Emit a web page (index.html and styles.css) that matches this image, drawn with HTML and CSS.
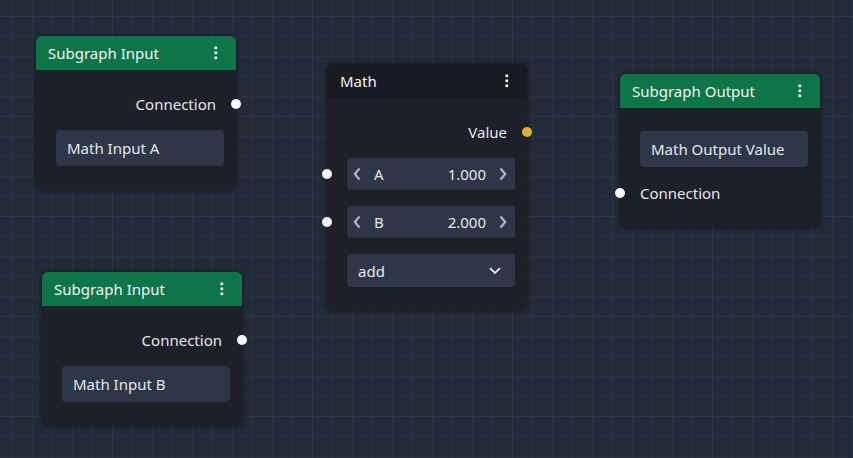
FILE: index.html
```html
<!DOCTYPE html>
<html>
<head>
<meta charset="utf-8">
<link rel="stylesheet" href="styles.css">
</head>
<body>
<div class="canvas">

  <div class="node node-in-a">
    <div class="node-header green">
      <span class="title">Subgraph Input</span>
      <svg class="menu" width="4" height="14" viewBox="0 0 4 14"><rect x="0.5" y="0.5" width="2.6" height="2.6" fill="#fff"/><rect x="0.5" y="5.5" width="2.6" height="2.6" fill="#fff"/><rect x="0.5" y="10.5" width="2.6" height="2.6" fill="#fff"/></svg>
    </div>
    <div class="node-body">
      <div class="row out"><span>Connection</span><span class="port"></span></div>
      <div class="text-field">Math Input A</div>
    </div>
  </div>

  <div class="node node-in-b">
    <div class="node-header green">
      <span class="title">Subgraph Input</span>
      <svg class="menu" width="4" height="14" viewBox="0 0 4 14"><rect x="0.5" y="0.5" width="2.6" height="2.6" fill="#fff"/><rect x="0.5" y="5.5" width="2.6" height="2.6" fill="#fff"/><rect x="0.5" y="10.5" width="2.6" height="2.6" fill="#fff"/></svg>
    </div>
    <div class="node-body">
      <div class="row out"><span>Connection</span><span class="port"></span></div>
      <div class="text-field">Math Input B</div>
    </div>
  </div>

  <div class="node node-math">
    <div class="node-header dark">
      <span class="title">Math</span>
      <svg class="menu" width="4" height="14" viewBox="0 0 4 14"><rect x="0.5" y="0.5" width="2.6" height="2.6" fill="#fff"/><rect x="0.5" y="5.5" width="2.6" height="2.6" fill="#fff"/><rect x="0.5" y="10.5" width="2.6" height="2.6" fill="#fff"/></svg>
    </div>
    <div class="node-body">
      <div class="row out"><span>Value</span><span class="port yellow"></span></div>
      <div class="num-field">
        <span class="port in"></span>
        <svg class="chev" width="8" height="14" viewBox="0 0 8 14"><path d="M6.5 1.5 L1.8 7 L6.5 12.5" fill="none" stroke="#b3b7c0" stroke-width="2.2"/></svg>
        <span class="num-label">A</span>
        <span class="num-value">1.000</span>
        <svg class="chev" width="8" height="14" viewBox="0 0 8 14"><path d="M1.5 1.5 L6.2 7 L1.5 12.5" fill="none" stroke="#b3b7c0" stroke-width="2.2"/></svg>
      </div>
      <div class="num-field gap">
        <span class="port in"></span>
        <svg class="chev" width="8" height="14" viewBox="0 0 8 14"><path d="M6.5 1.5 L1.8 7 L6.5 12.5" fill="none" stroke="#b3b7c0" stroke-width="2.2"/></svg>
        <span class="num-label">B</span>
        <span class="num-value">2.000</span>
        <svg class="chev" width="8" height="14" viewBox="0 0 8 14"><path d="M1.5 1.5 L6.2 7 L1.5 12.5" fill="none" stroke="#b3b7c0" stroke-width="2.2"/></svg>
      </div>
      <div class="select-field">
        <span>add</span>
        <svg width="12" height="8" viewBox="0 0 12 8"><path d="M1 1.2 L6 6 L11 1.2" fill="none" stroke="#e8e8e8" stroke-width="1.8"/></svg>
      </div>
    </div>
  </div>

  <div class="node node-out">
    <div class="node-header green">
      <span class="title">Subgraph Output</span>
      <svg class="menu" width="4" height="14" viewBox="0 0 4 14"><rect x="0.5" y="0.5" width="2.6" height="2.6" fill="#fff"/><rect x="0.5" y="5.5" width="2.6" height="2.6" fill="#fff"/><rect x="0.5" y="10.5" width="2.6" height="2.6" fill="#fff"/></svg>
    </div>
    <div class="node-body out-body">
      <div class="text-field first">Math Output Value</div>
      <div class="row in"><span class="port"></span><span>Connection</span></div>
    </div>
  </div>

</div>
</body>
</html>
```

FILE: styles.css
```css
html, body {
  margin: 0;
  padding: 0;
}

body {
  font-family: "Noto Sans", "Open Sans", sans-serif;
  font-size: 15px;
  color: #e6e7ea;
}

.canvas {
  position: relative;
  width: 853px;
  height: 458px;
  overflow: hidden;
  background-color: #212b3a;
  background-image:
    linear-gradient(to right, #2b3647 1px, transparent 1px),
    linear-gradient(to bottom, #2b3647 1px, transparent 1px),
    linear-gradient(to right, #273242 1px, transparent 1px),
    linear-gradient(to bottom, #273242 1px, transparent 1px);
  background-size: 100px 100px, 100px 100px, 20px 20px, 20px 20px;
  background-position: 12px 16px, 12px 16px, 12px 16px, 12px 16px;
}

.node {
  position: absolute;
  width: 200px;
  background: #1e2029;
  border-radius: 6px;
  box-shadow: 0 0 5px rgba(0, 0, 0, 0.5);
}

.node-in-a { left: 36px; top: 36px; }
.node-in-b { left: 42px; top: 272px; }
.node-math { left: 327px; top: 64px; }
.node-out  { left: 620px; top: 74px; }

.node-header {
  height: 34px;
  display: flex;
  align-items: center;
  justify-content: space-between;
  padding: 0 18px 0 12px;
  border-radius: 6px 6px 0 0;
  color: #f2f3f4;
}

.node-header.green { background: #0e7548; }
.node-header.dark { background: #191b23; padding-left: 13px; }

.menu { display: block; }

.node-body {
  display: flex;
  flex-direction: column;
  padding: 12px 20px 24px;
}

.node-body.out-body {
  padding: 23px 20px 13px;
}

.row {
  position: relative;
  height: 44px;
  display: flex;
  align-items: center;
}

.row.out { justify-content: flex-end; }
.row.in { justify-content: flex-start; margin-top: 4px; }

.port {
  position: absolute;
  top: 50%;
  width: 10px;
  height: 10px;
  margin-top: -5px;
  border-radius: 50%;
  background: #f7f7f7;
}

.row.out .port { right: -25px; }
.row.in .port { left: -25px; }
.port.in { left: -25px; }
.port.yellow { background: #e2b02f; }

.text-field,
.num-field,
.select-field {
  margin-right: -8px;
  background: #2d3748;
  border-radius: 4px;
  display: flex;
  align-items: center;
}

.text-field {
  margin-top: 4px;
  height: 36px;
  padding-left: 11px;
}

.text-field.first { margin-top: 0; }

.num-field {
  position: relative;
  margin-top: 4px;
  height: 32px;
  padding: 0 8px 0 6px;
}

.num-field.gap { margin-top: 16px; }

.chev { display: block; flex: none; }

.num-label { margin-left: 13px; }

.num-value {
  flex: 1;
  text-align: right;
  margin-right: 13px;
}

.select-field {
  margin-top: 16px;
  height: 33px;
  justify-content: space-between;
  padding: 0 14px 0 11px;
}

.select-field svg { display: block; }
```
